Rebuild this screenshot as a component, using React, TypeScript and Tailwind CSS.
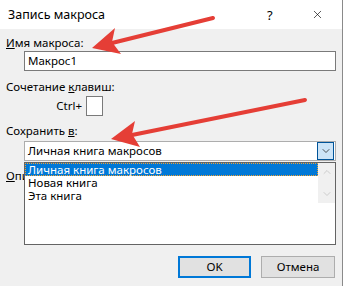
import { X, ChevronDown, ChevronUp } from "lucide-react";

const font = { fontFamily: '"Noto Sans", "Open Sans", sans-serif' };

function Arrows() {
  return (
    <svg className="absolute inset-0 pointer-events-none" width="343" height="286">
      {/* стрелка к имени макроса */}
      <line x1="213" y1="18" x2="112" y2="43" stroke="#e53e36" strokeWidth="4" strokeLinecap="round" />
      <polygon points="92,48 115,28 112,42 121,54" fill="#e53e36" />
      {/* стрелка к «Сохранить в» */}
      <line x1="305" y1="100" x2="132" y2="135" stroke="#e53e36" strokeWidth="4" strokeLinecap="round" />
      <polygon points="111,139 135,121 132,134 140,147" fill="#e53e36" />
    </svg>
  );
}

export default function App() {
  return (
    <div
      className="relative w-[343px] h-[286px] bg-[#f0f0f0] border-r border-[#8a8a8a] overflow-hidden text-[11.5px] text-black leading-4"
      style={font}
    >
      {/* заголовок окна */}
      <div className="h-[29px] bg-white flex items-center pl-2 pr-[18px] text-[12.5px]">
        <span className="flex-1">Запись макроса</span>
        <span className="w-[44px] text-[13px]">?</span>
        <X size={13} strokeWidth={1.2} />
      </div>

      <div className="pl-[6px] pr-[6px] flex flex-col">
        <div className="mt-[6px]">
          <u>И</u>мя макроса:
        </div>
        <div className="ml-[18px] h-[20px] w-[312px] bg-white border border-[#7a7a7a] flex items-center px-[3px]">
          Макрос1
        </div>

        <div className="mt-[8px]">
          Сочетание <u>к</u>лавиш:
        </div>
        <div className="flex items-center mt-[1px]">
          <span className="w-[76px] text-right">Ctrl+</span>
          <div className="ml-[4px] w-[17px] h-[20px] bg-white border border-[#7a7a7a]" />
        </div>

        <div className="mt-[7px]">
          Сохранить <u>в</u>:
        </div>
        <div className="ml-[18px] mt-[2px] h-[20px] w-[312px] bg-white border border-[#adadad] flex items-center pl-[3px]">
          <span className="flex-1">Личная книга макросов</span>
          <div className="w-[17px] h-[18px] bg-[#cce4f7] border border-[#005499] flex items-center justify-center mr-[1px]">
            <ChevronDown size={12} strokeWidth={1.5} color="#222" />
          </div>
        </div>

        {/* подпись частично закрыта раскрытым списком */}
        <div className="mt-[7px] w-[18px] overflow-hidden whitespace-nowrap">
          <u>О</u>писание:
        </div>

        <div className="flex justify-end gap-[10px] mt-[72px] mr-[1px]">
          <button className="w-[73px] h-[22px] bg-[#e1e1e1] border-2 border-[#0078d7]">OK</button>
          <button className="w-[74px] h-[22px] bg-[#e1e1e1] border border-[#adadad]">Отмена</button>
        </div>
      </div>

      {/* раскрытый список */}
      <div className="absolute left-[24px] top-[162px] w-[312px] h-[83px] bg-white border border-[#646464] flex">
        <div className="flex-1 flex flex-col">
          <div className="h-[13px] bg-[#0078d7] text-white border border-dotted border-[#f0a030] flex items-center pl-[2px] leading-none">
            Личная книга макросов
          </div>
          <div className="h-[13px] flex items-center pl-[3px] leading-none">Новая книга</div>
          <div className="h-[13px] flex items-center pl-[3px] leading-none">Эта книга</div>
        </div>
        <div className="w-[17px] h-[40px] bg-[#f0f0f0] flex flex-col items-center justify-between py-[3px]">
          <ChevronUp size={12} strokeWidth={1.5} color="#c0c0c0" />
          <ChevronDown size={12} strokeWidth={1.5} color="#c0c0c0" />
        </div>
      </div>

      <Arrows />
    </div>
  );
}
